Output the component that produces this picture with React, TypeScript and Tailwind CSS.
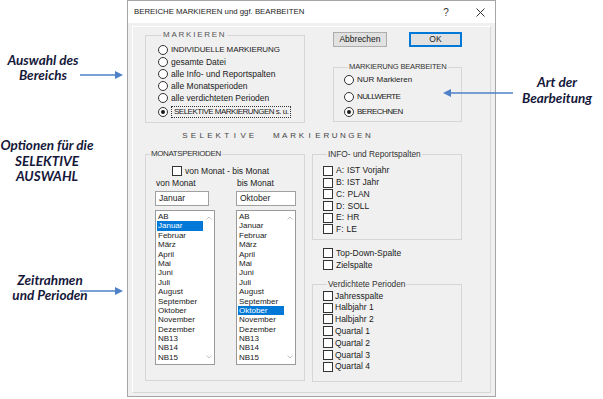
import type { ReactNode } from 'react';

const months = ['AB', 'Januar', 'Februar', 'März', 'April', 'Mai', 'Juni', 'Juli', 'August', 'September', 'Oktober', 'November', 'Dezember', 'NB13', 'NB14', 'NB15'];

function Radio({ label, checked, focus, size = '' }: { label: string; checked?: boolean; focus?: boolean; size?: string }) {
  return (
    <div className="flex items-center h-[12px]">
      <span className="w-[10px] h-[10px] rounded-full border border-[#333] bg-white flex items-center justify-center shrink-0">
        {checked && <span className="w-[4px] h-[4px] rounded-full bg-[#1a1a1a]" />}
      </span>
      <span className={`ml-[3px] whitespace-nowrap ${size} ${focus ? 'border border-dotted border-[#333] px-[2px] leading-[10px]' : ''}`}>{label}</span>
    </div>
  );
}

function Check({ children, h = 'h-[12px]', gap = 'ml-[3px]' }: { children: ReactNode; h?: string; gap?: string }) {
  return (
    <div className={`flex items-center ${h}`}>
      <span className="w-[10px] h-[10px] border border-[#333] bg-white shrink-0" />
      <span className={`${gap} whitespace-nowrap`}>{children}</span>
    </div>
  );
}

function Group({ label, className, legendClass, children }: { label: string; className: string; legendClass?: string; children: ReactNode }) {
  return (
    <fieldset className={`border border-[#d6d6d6] ${className}`}>
      <legend className={`ml-[4px] px-[1px] leading-[10px] whitespace-nowrap ${legendClass ?? ''}`}>{label}</legend>
      {children}
    </fieldset>
  );
}

function ListBox({ selected }: { selected: string }) {
  return (
    <div className="mt-[4px] h-[155px] w-[60px] border border-[#9a9a9a] bg-white flex text-[8px]">
      <div className="w-[47px] pl-[1px] pt-[1px]">
        {months.map(m => (
          <div key={m} className={`h-[9.4px] leading-[9.4px] px-[1px] ${m === selected ? 'bg-[#0078d7] text-white' : ''}`}>{m}</div>
        ))}
      </div>
      <div className="flex-1 flex flex-col justify-between items-center py-[5px]">
        <svg width="6" height="4" viewBox="0 0 6 4"><path d="M0.5 3.5 L3 1 L5.5 3.5" fill="none" stroke="#c2c2c2" strokeWidth="1" /></svg>
        <svg width="6" height="4" viewBox="0 0 6 4"><path d="M0.5 0.5 L3 3 L5.5 0.5" fill="none" stroke="#c2c2c2" strokeWidth="1" /></svg>
      </div>
    </div>
  );
}

function MonthColumn({ label, value, selected, width }: { label: string; value: string; selected: string; width: string }) {
  return (
    <div className="flex flex-col w-[60px]">
      <div className="h-[10px] leading-[10px] pl-[1px]">{label}</div>
      <div className={`mt-[3px] h-[15px] ${width} border border-[#a0a0a0] bg-white pl-[3px] leading-[13px]`}>{value}</div>
      <ListBox selected={selected} />
    </div>
  );
}

const note = "font-['Lato',sans-serif] font-bold italic text-[13.5px] text-[#15183a] text-center";

export default function App() {
  return (
    <div className="relative w-[603px] h-[399px] bg-white flex overflow-hidden font-['Liberation_Sans',Arial,sans-serif] text-[8.5px] text-[#1a1a1a]">
      {/* left notes */}
      <div className="w-[127px] shrink-0 flex flex-col">
        <div className={`${note} w-[86px] mt-[53px] leading-[15px]`}>Auswahl des<br />Bereichs</div>
        <div className={`${note} w-[94px] mt-[55px] leading-[15.5px]`}>Optionen für die<br />SELEKTIVE<br />AUSWAHL</div>
        <div className={`${note} w-[100px] mt-[88px] leading-[15px]`}>Zeitrahmen<br />und Perioden</div>
      </div>

      {/* dialog */}
      <div className="w-[369px] h-[397px] shrink-0 border border-[#a6a6a6] flex flex-col">
        <div className="h-[22px] bg-white flex items-center pl-[6px]">
          <span className="flex-1 whitespace-nowrap text-[7.8px]">BEREICHE MARKIEREN und ggf. BEARBEITEN</span>
          <span className="w-[12px] text-center text-[10px] text-[#333]">?</span>
          <span className="w-[12px] ml-[22px] mr-[9px] flex justify-center">
            <svg width="9" height="9" viewBox="0 0 9 9"><path d="M0.5 0.5 L8.5 8.5 M8.5 0.5 L0.5 8.5" stroke="#333" strokeWidth="1" /></svg>
          </span>
        </div>
        <div className="flex-1 bg-[#f0f0f0] flex">
          <div className="flex-1 ml-[4px] mt-[3px] mr-[4px] mb-[3px] border border-t-white border-l-white border-r-[#d8d8d8] border-b-[#d8d8d8]">
            <div className="flex items-start pl-[12px] pt-[3px]">
              <Group label="MARKIEREN" className="w-[160px] h-[93px] pl-[12px] pt-[4px]" legendClass="text-[8px] tracking-[0.22em] text-[#555]">
                <Radio label="INDIVIDUELLE MARKIERUNG" size="text-[8px] tracking-[-0.1px]" />
                <Radio label="gesamte Datei" />
                <Radio label="alle Info- und Reportspalten" />
                <Radio label="alle Monatsperioden" />
                <Radio label="alle verdichteten Perioden" />
                <div className="mt-[2px]"><Radio label="SELEKTIVE MARKIERUNGEN s. u." size="text-[8px] tracking-[-0.5px]" checked focus /></div>
              </Group>
              <div className="ml-[28px] mt-[2px] flex flex-col">
                <div className="flex gap-[22px]">
                  <div className="w-[54px] h-[15px] bg-[#e1e1e1] border border-[#adadad] flex items-center justify-center">Abbrechen</div>
                  <div className="w-[53px] h-[15px] bg-[#e1e1e1] border-2 border-[#0078d7] flex items-center justify-center">OK</div>
                </div>
                <Group label="MARKIERUNG BEARBEITEN" className="mt-[15px] w-[129px] h-[60px] pl-[10px] pt-[2px]" legendClass="text-[7.6px] tracking-[-0.2px] text-[#333]">
                  <Radio label="NUR Markieren" size="text-[8px]" />
                  <div className="mt-[5px]"><Radio label="NULLWERTE" size="text-[8px] tracking-[-0.6px]" /></div>
                  <div className="mt-[3px]"><Radio label="BERECHNEN" size="text-[8px] tracking-[-0.5px]" checked /></div>
                </Group>
              </div>
            </div>

            <div className="mt-[8px] ml-[50px] w-[187px] h-[10px] leading-[10px] text-[8px] text-[#444] flex justify-between">
              {'SELEKTIVE  MARKIERUNGEN'.split('').map((c, i) => (
                <span key={i} className="w-[4px] flex justify-center">{c === ' ' ? '' : c}</span>
              ))}
            </div>

            <div className="flex items-start pl-[12px] mt-[8px]">
              <Group label="MONATSPERIODEN" className="w-[160px] h-[232px]" legendClass="text-[8px] tracking-[-0.4px] text-[#333]">
                <div className="mt-[6px] pl-[26px]">
                  <Check>von Monat - bis Monat</Check>
                </div>
                <div className="mt-[1px] pl-[9px] flex gap-[21px]">
                  <MonthColumn label="von Monat" value="Januar" selected="Januar" width="w-[54px]" />
                  <MonthColumn label="bis Monat" value="Oktober" selected="Oktober" width="w-[60px]" />
                </div>
              </Group>

              <div className="ml-[7px] w-[150px] flex flex-col">
                <Group label="INFO- und Reportspalten" className="w-[150px] h-[91px] pl-[10px] pt-[6px]" legendClass="text-[8.3px] text-[#333]">
                  {[['A', 'IST Vorjahr'], ['B', 'IST Jahr'], ['C', 'PLAN'], ['D', 'SOLL'], ['E', 'HR'], ['F', 'LE']].map(([k, v]) => (
                    <Check key={k} h="h-[11.7px]">{k}:<span className="ml-[3px]">{v}</span></Check>
                  ))}
                </Group>
                <div className="mt-[7px] pl-[11px]">
                  <Check>Top-Down-Spalte</Check>
                  <Check>Zielspalte</Check>
                </div>
                <Group label="Verdichtete Perioden" className="mt-[8px] w-[150px] h-[103px] pl-[10px] pt-[1px]" legendClass="text-[8.35px] text-[#333]">
                  {['Jahresspalte', 'Halbjahr 1', 'Halbjahr 2', 'Quartal 1', 'Quartal 2', 'Quartal 3', 'Quartal 4'].map(v => (
                    <Check key={v} h="h-[11.8px]" gap="ml-[2px]">{v}</Check>
                  ))}
                </Group>
              </div>
            </div>
          </div>
        </div>
      </div>

      {/* right note */}
      <div className="flex-1 pl-[15px]">
        <div className={`${note} w-[92px] mt-[74px] leading-[16px]`}>Art der<br />Bearbeitung</div>
      </div>

      {/* arrows */}
      <svg className="absolute inset-0 pointer-events-none" width="603" height="399" viewBox="0 0 603 399">
        <g stroke="#4f81c7" strokeWidth="1.5" fill="#4f81c7">
          <line x1="80" y1="75" x2="116" y2="75" />
          <polygon points="123,75 115,71 115,79" stroke="none" />
          <line x1="80" y1="291" x2="116" y2="291" />
          <polygon points="123,291 115,287 115,295" stroke="none" />
          <line x1="513" y1="93" x2="450" y2="93" />
          <polygon points="443,93 451,89 451,97" stroke="none" />
        </g>
      </svg>
    </div>
  );
}
